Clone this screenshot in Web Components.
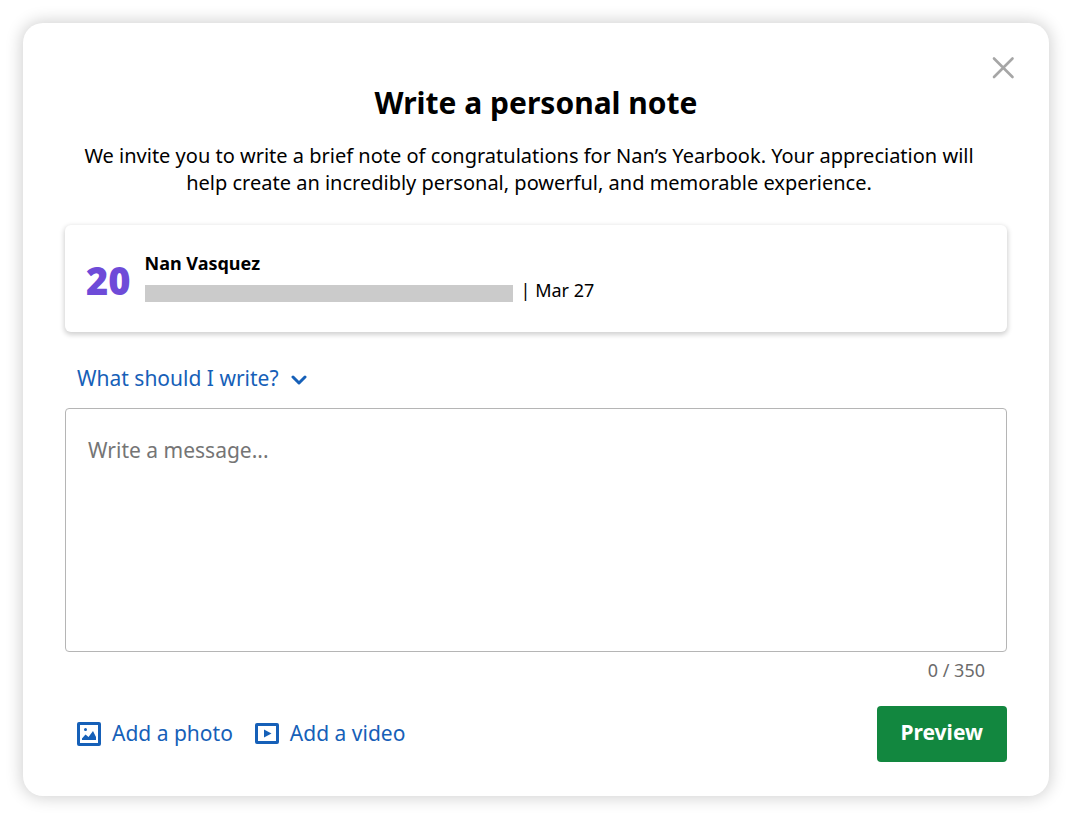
<!DOCTYPE html>
<html lang="en">
<head>
<meta charset="utf-8">
<meta name="viewport" content="width=device-width, initial-scale=1">
<title>Write a personal note</title>
<style>
  body {
    margin: 0;
    padding: 23px;
    background: #fff;
    color: #000;
    font-family: "Noto Sans", "Open Sans", sans-serif;
    font-size: 21px;
  }
</style>
</head>
<body>
<note-dialog heading="Write a personal note">
  <span slot="intro">We invite you to write a brief note of congratulations for Nan’s Yearbook. Your appreciation will help create an incredibly personal, powerful, and memorable experience.</span>
  <recipient-card years="20">
    <span slot="name">Nan Vasquez</span>
    <span slot="date">| Mar 27</span>
  </recipient-card>
  <note-hint>What should I write?</note-hint>
  <note-field limit="350" placeholder="Write a message..."></note-field>
  <note-actions slot="footer">
    <media-button icon="photo">Add a photo</media-button>
    <media-button icon="video">Add a video</media-button>
    <primary-button slot="end">Preview</primary-button>
  </note-actions>
</note-dialog>

<script>
  class BaseElement extends HTMLElement {
    constructor() {
      super();
      this.attachShadow({ mode: "open" });
    }
    render(markup) {
      const template = document.createElement("template");
      template.innerHTML = markup;
      this.shadowRoot.replaceChildren(template.content.cloneNode(true));
    }
  }

  customElements.define("note-dialog", class extends BaseElement {
    connectedCallback() {
      this.render(`
        <style>
          :host {
            display: block;
            position: relative;
            box-sizing: border-box;
            padding: 60px 42px 34px;
            border-radius: 20px;
            background: #fff;
            box-shadow: 0 0 16px 2px rgba(0, 0, 0, 0.18);
          }
          h1 {
            margin: 0 0 19px;
            font-size: 30px;
            line-height: 40px;
            font-weight: 700;
            text-align: center;
          }
          p {
            margin: 0 32px 29px 18px;
            font-size: 20px;
            line-height: 27px;
            text-align: center;
          }
          .close {
            position: absolute;
            top: 33px;
            right: 34px;
            display: flex;
            padding: 0;
            border: 0;
            background: none;
            cursor: pointer;
          }
        </style>
        <section role="dialog" aria-labelledby="heading">
          <button class="close" type="button" aria-label="Close">
            <svg width="24" height="24" viewBox="0 0 24 24" fill="none" stroke="#a6a6a6" stroke-width="2.6" stroke-linecap="round"><path d="M3 2.500l18.500 18.500M21.500 2.500l-18.500 18.500"/></svg>
          </button>
          <h1 id="heading">${this.getAttribute("heading")}</h1>
          <p><slot name="intro"></slot></p>
          <slot></slot>
          <slot name="footer"></slot>
        </section>`);
    }
  });

  customElements.define("recipient-card", class extends BaseElement {
    connectedCallback() {
      this.render(`
        <style>
          :host {
            display: flex;
            align-items: center;
            gap: 14px;
            padding: 25px 21px 28px;
            border-radius: 6px;
            background: #fff;
            box-shadow: 0 2px 5px 1px rgba(0, 0, 0, 0.18);
            font-size: 18px;
            line-height: 27px;
          }
          .years {
            padding-top: 6px;
            color: #6e4bd8;
            font-family: "Open Sans", "Noto Sans", sans-serif;
            font-size: 38px;
            line-height: 48px;
            font-weight: 800;
          }
          .details { flex: 1; }
          .name { font-weight: 700; }
          .meta { display: flex; align-items: center; gap: 8px; }
          .redacted { flex: 0 1 368px; height: 17px; margin-top: 5px; background: #cbcbcb; }
        </style>
        <div class="years">${this.getAttribute("years")}</div>
        <div class="details">
          <div class="name"><slot name="name"></slot></div>
          <div class="meta"><span class="redacted"></span><slot name="date"></slot></div>
        </div>`);
    }
  });

  customElements.define("note-hint", class extends BaseElement {
    connectedCallback() {
      this.render(`
        <style>
          :host { display: flex; margin-top: 30px; padding: 0 12px; }
          button {
            display: flex;
            align-items: center;
            gap: 12px;
            padding: 0;
            border: 0;
            background: none;
            color: #1660b8;
            font: inherit;
            line-height: 32px;
            cursor: pointer;
          }
          svg { margin-top: 3px; }
        </style>
        <button type="button" aria-expanded="false"><slot></slot>
          <svg width="16" height="12" viewBox="0 0 16 12" fill="none" stroke="#1660b8" stroke-width="3" stroke-linecap="round" stroke-linejoin="round"><path d="M2 3l6 6 6-6"/></svg>
        </button>`);
    }
  });

  customElements.define("note-field", class extends BaseElement {
    connectedCallback() {
      const limit = this.getAttribute("limit");
      const placeholder = this.getAttribute("placeholder");
      this.render(`
        <style>
          :host { display: block; margin-top: 14px; }
          textarea {
            display: block;
            box-sizing: border-box;
            width: 100%;
            height: 244px;
            padding: 27px 22px;
            border: 1px solid #b5b5b5;
            border-radius: 4px;
            background: #fff;
            color: #000;
            font: inherit;
            line-height: 28px;
            resize: none;
          }
          textarea::placeholder { color: #757575; opacity: 1; }
          output {
            display: block;
            padding-right: 22px;
            color: #6b6b6b;
            font-size: 18px;
            line-height: 36px;
            text-align: right;
          }
        </style>
        <textarea id="message" aria-label="Message" maxlength="${limit}" placeholder="${placeholder}"></textarea>
        <output for="message">0 / ${limit}</output>`);
      const area = this.shadowRoot.querySelector("textarea");
      const count = this.shadowRoot.querySelector("output");
      area.addEventListener("input", () => {
        count.textContent = `${area.value.length} / ${limit}`;
      });
    }
  });

  customElements.define("note-actions", class extends BaseElement {
    connectedCallback() {
      this.render(`
        <style>
          :host {
            display: flex;
            align-items: center;
            justify-content: space-between;
            margin-top: 18px;
            padding-left: 12px;
          }
          .media { display: flex; gap: 22px; padding-bottom: 2px; }
        </style>
        <div class="media"><slot></slot></div>
        <slot name="end"></slot>`);
    }
  });

  const mediaIcons = {
    photo: `<rect x="1.5" y="1.5" width="21" height="21" rx="0.5" stroke="currentColor" stroke-width="3"/><circle cx="8.5" cy="7.500" r="1.5" fill="currentColor"/><path d="M5 18v-1.500l3.500-4 3 2.500 4.500-6 3 6V18z" fill="currentColor"/>`,
    video: `<rect x="1.500" y="2.500" width="21" height="18" rx="0.500" stroke="currentColor" stroke-width="3"/><path d="M9 7.500v8l7.500-4z" fill="currentColor"/>`
  };

  customElements.define("media-button", class extends BaseElement {
    connectedCallback() {
      this.render(`
        <style>
          :host { display: block; }
          button {
            display: flex;
            align-items: center;
            gap: 11px;
            padding: 0;
            border: 0;
            background: none;
            color: #1660b8;
            font: inherit;
            line-height: 30px;
            cursor: pointer;
          }
          svg { margin-top: 2px; }
        </style>
        <button type="button"><svg width="24" height="24" viewBox="0 0 24 24" fill="none" aria-hidden="true">${mediaIcons[this.getAttribute("icon")]}</svg><slot></slot></button>`);
    }
  });

  customElements.define("primary-button", class extends BaseElement {
    connectedCallback() {
      this.render(`
        <style>
          :host { display: block; }
          button {
            padding: 10px 24px 14px;
            border: 0;
            border-radius: 4px;
            background: #12873f;
            color: #fff;
            font: inherit;
            font-weight: 700;
            line-height: 32px;
            cursor: pointer;
          }
        </style>
        <button type="button"><slot></slot></button>`);
    }
  });
</script>
</body>
</html>
